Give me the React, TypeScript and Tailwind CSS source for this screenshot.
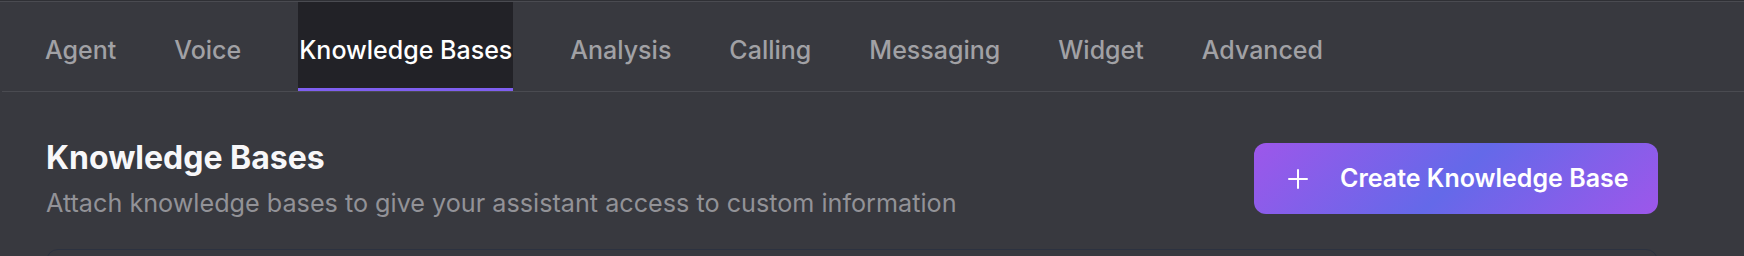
import { useState } from 'react';

const tabs = ['Agent', 'Voice', 'Knowledge Bases', 'Analysis', 'Calling', 'Messaging', 'Widget', 'Advanced'];

function PlusIcon() {
  return (
    <svg width="20" height="20" viewBox="0 0 20 20" fill="none" stroke="currentColor" strokeWidth={2} strokeLinecap="round">
      <path d="M1 10h18" />
      <path d="M10 1v18" />
    </svg>
  );
}

export default function App() {
  const [active, setActive] = useState('Knowledge Bases');

  return (
    <div className="h-[256px] w-full overflow-hidden bg-[#38393f] font-['Inter',sans-serif]">
      <div className="h-px bg-[#2f3035]" />
      <div className="h-px bg-[#4a4b51]" />

      {/* Tabs */}
      <div className="ml-[2px] flex gap-[56px] border-b border-[#4a4b51] pl-[42px]">
        {tabs.map((t) => (
          <button
            key={t}
            onClick={() => setActive(t)}
            className={
              'border-b-[3px] px-px pb-[22px] pt-[32px] text-[25px] font-medium leading-[32px] ' +
              (active === t
                ? 'border-[#7f5ff0] bg-[#222227] text-white'
                : 'border-transparent text-[#a1a1a5]')
            }
          >
            {t}
          </button>
        ))}
      </div>

      {/* Header */}
      <div className="pl-[46px] pr-[86px]">
        <div className="flex items-center justify-between pt-[47px]">
          <div>
            <h2 className="text-[32px] font-bold leading-[38px] text-[#f7f7f9]">Knowledge Bases</h2>
            <p className="mt-[11px] text-[25.2px] leading-[30px] text-[#929297]">
              Attach knowledge bases to give your assistant access to custom information
            </p>
          </div>
          <button className="flex h-[71px] w-[404px] items-center gap-[32px] rounded-xl bg-[linear-gradient(135deg,#9d57ea_0%,#6469e9_50%,#9d57ea_100%)] pl-[34px] text-[25px] font-semibold text-white">
            <PlusIcon />
            <span>Create Knowledge Base</span>
          </button>
        </div>

        <div className="mt-[31px] h-[120px] rounded-xl border border-[#2c3240]" />
      </div>
    </div>
  );
}
